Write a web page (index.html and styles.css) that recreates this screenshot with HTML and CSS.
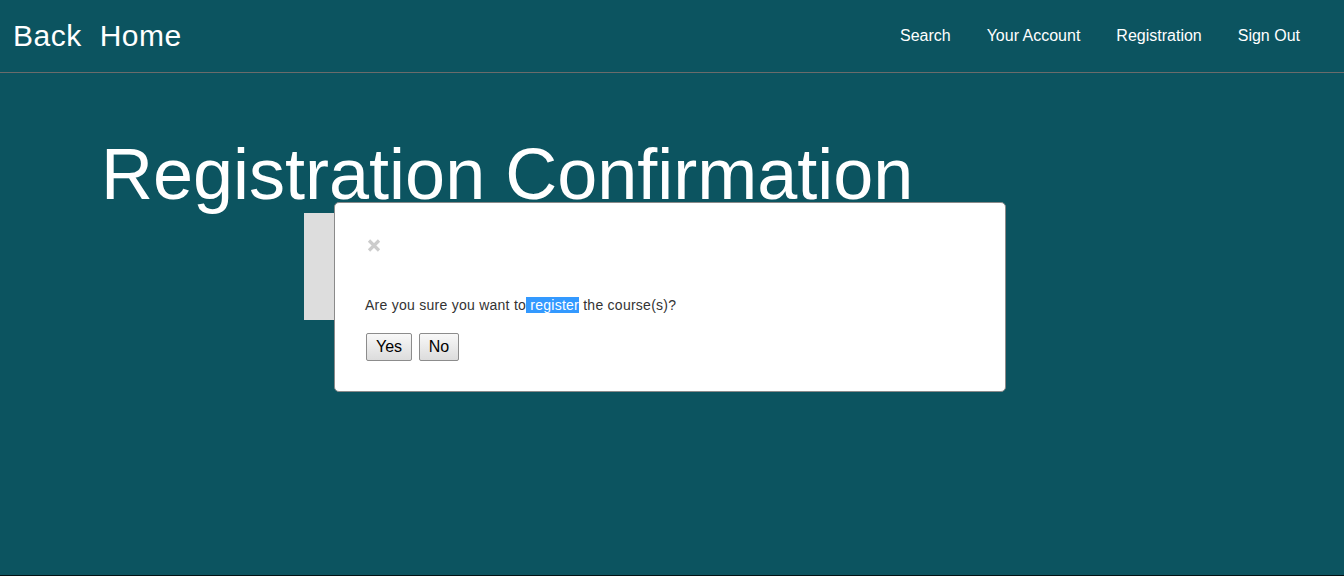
FILE: index.html
```html
<!DOCTYPE html>
<html lang="en">
<head>
<meta charset="utf-8">
<title>Registration Confirmation</title>
<link rel="stylesheet" href="styles.css">
</head>
<body>
<header class="topbar">
  <nav class="brand">
    <a class="brand-link" href="#">Back</a>
    <a class="brand-link" href="#">Home</a>
  </nav>
  <nav class="menu">
    <a class="menu-link" href="#">Search</a>
    <a class="menu-link" href="#">Your Account</a>
    <a class="menu-link" href="#">Registration</a>
    <a class="menu-link" href="#">Sign Out</a>
  </nav>
</header>
<main class="content">
  <h1 class="title">Registration Confirmation</h1>
  <div class="panel"></div>
</main>
<div class="modal">
  <div class="modal-close" aria-label="Close">
    <svg class="close-icon" width="14" height="13" viewBox="0 0 14 13"><path d="M2 1.5 L12 11.5 M12 1.5 L2 11.5" stroke="#cccccc" stroke-width="3.2" stroke-linecap="butt" fill="none"/></svg>
  </div>
  <p class="modal-text">Are you sure you want to<span class="sel"> register</span> the course(s)?</p>
  <div class="modal-actions">
    <button class="btn btn-yes" type="button">Yes</button>
    <button class="btn btn-no" type="button">No</button>
  </div>
</div>
</body>
</html>
```
FILE: styles.css
```css
html {
  background: #031214;
}
body {
  margin: 0;
  height: 575px;
  background: #0c5460;
  font-family: "Liberation Sans", Arial, sans-serif;
  color: #fff;
  position: relative;
  overflow: hidden;
}
.topbar {
  height: 72px;
  border-bottom: 1px solid #6b6b6b;
  display: flex;
  align-items: center;
  justify-content: space-between;
}
.brand {
  display: flex;
  gap: 18px;
  padding-left: 13px;
}
.brand-link {
  color: #fff;
  text-decoration: none;
  font-size: 30px;
  line-height: 34px;
  letter-spacing: 0.5px;
}
.menu {
  display: flex;
  padding-right: 26px;
}
.menu-link {
  color: #fff;
  text-decoration: none;
  font-size: 16px;
  line-height: 20px;
  padding: 0 18px;
}
.content {
  padding-left: 101px;
}
.title {
  margin: 63px 0 0 0;
  font-size: 72px;
  line-height: 77px;
  font-weight: normal;
}
.panel {
  margin-left: 203px;
  width: 500px;
  height: 107px;
  background: #dddddd;
}
.modal {
  position: absolute;
  left: 334px;
  top: 202px;
  width: 670px;
  height: 188px;
  background: #fff;
  border: 1px solid #8a8a8a;
  border-radius: 5px;
  color: #333;
}
.modal-close {
  margin: 36px 0 0 32px;
  width: 14px;
  height: 13px;
}
.close-icon {
  display: block;
}
.modal-text {
  margin: 43px 0 0 30px;
  font-size: 14px;
  line-height: 20px;
  letter-spacing: 0.26px;
}
.sel {
  background: #3399ff;
  color: #fff;
}
.modal-actions {
  display: flex;
  gap: 7px;
  margin: 18px 0 0 31px;
}
.btn {
  height: 28px;
  padding: 0;
  font-family: "Liberation Sans", Arial, sans-serif;
  font-size: 16px;
  color: #000;
  background: linear-gradient(#f8f8f8, #dcdcdc);
  border: 1px solid #8c8c8c;
  border-radius: 2px;
}
.btn-yes {
  width: 46px;
}
.btn-no {
  width: 40px;
}
```
